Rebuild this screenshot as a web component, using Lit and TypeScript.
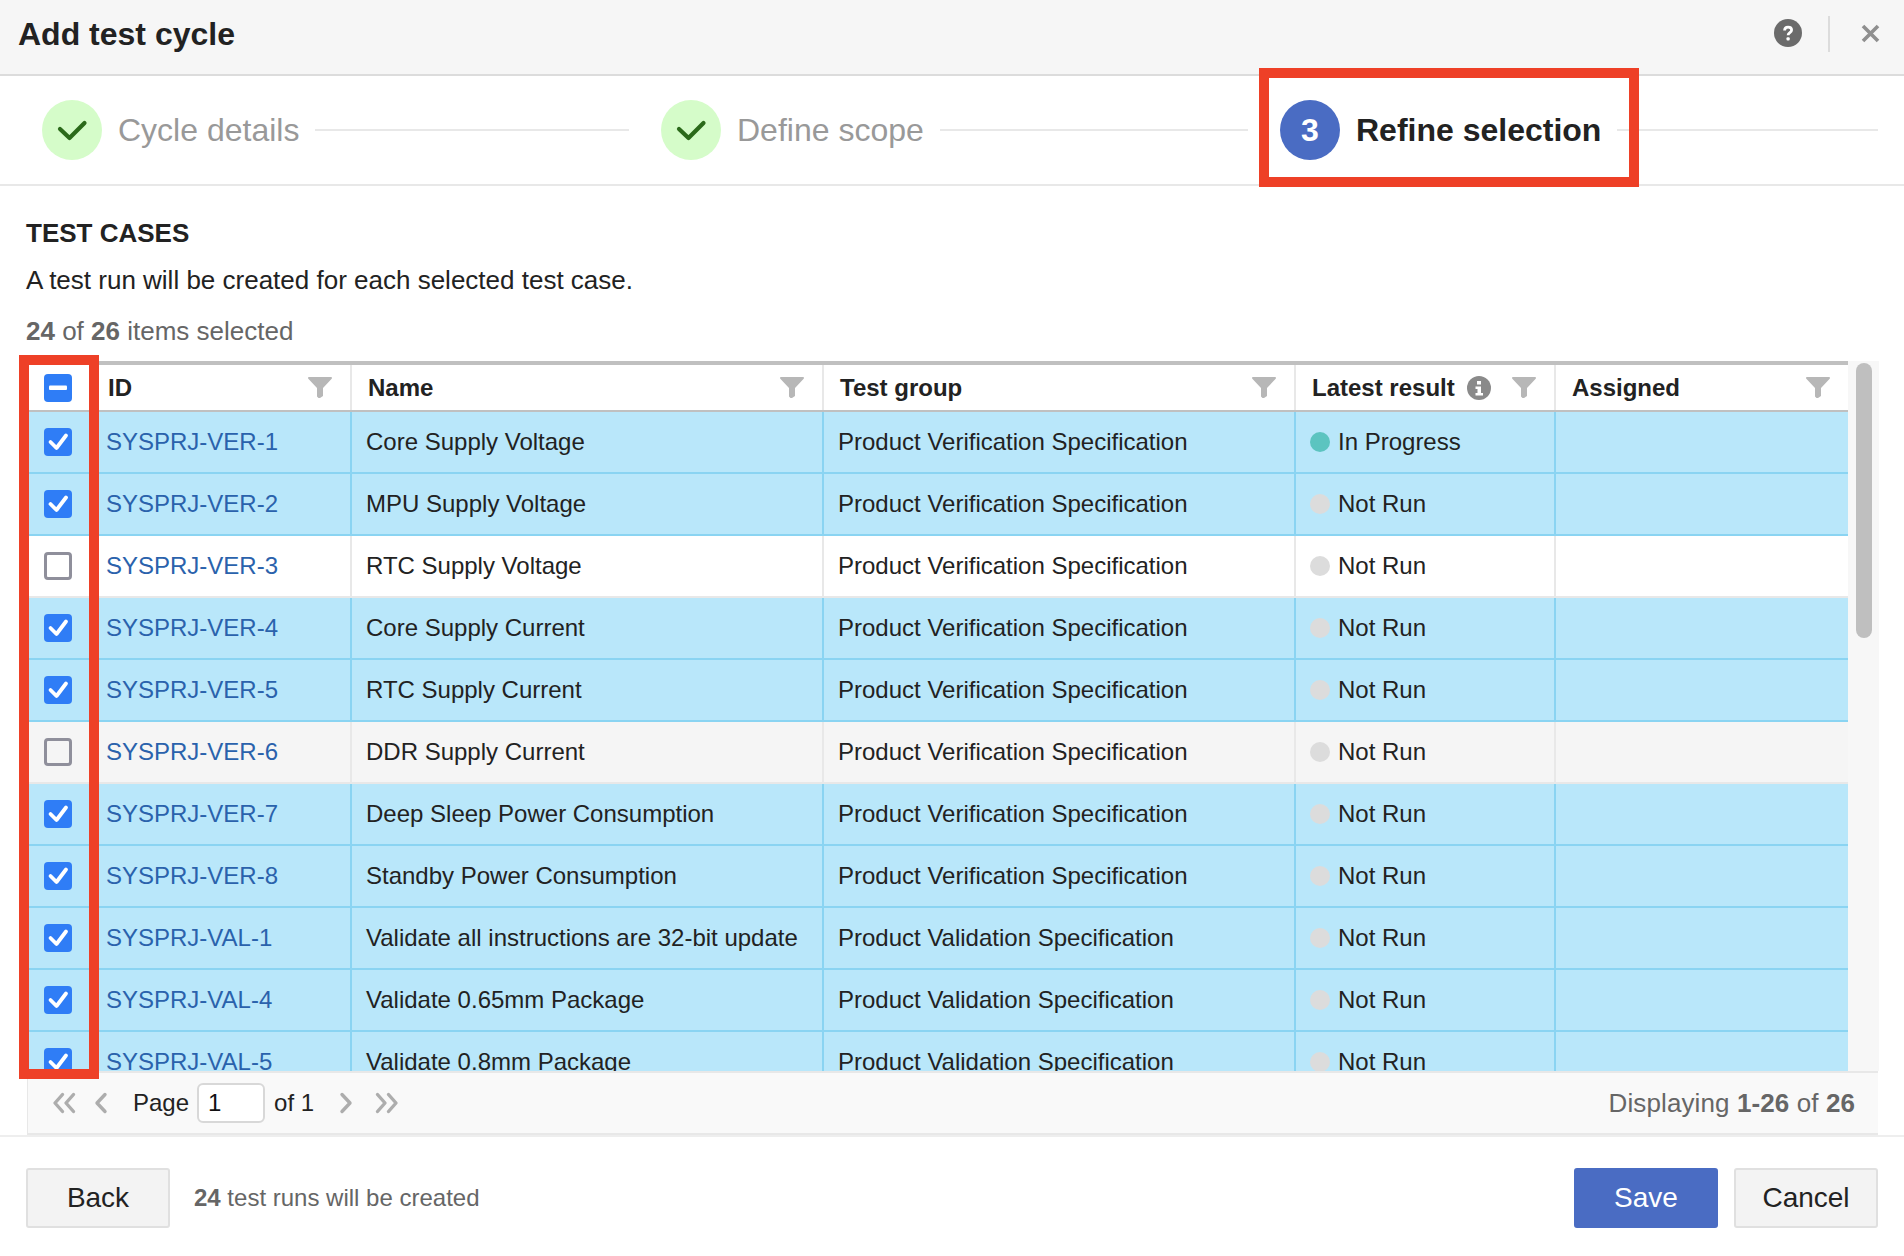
import { LitElement, css, html, svg } from "lit";
import { classMap } from "lit/directives/class-map.js";
import { customElement } from "lit/decorators.js";

type Row = { id: string; name: string; group: string; result: string; selected: boolean; hover?: boolean };

const VER = "Product Verification Specification";
const VAL = "Product Validation Specification";

const rows: Row[] = [
  { id: "SYSPRJ-VER-1", name: "Core Supply Voltage", group: VER, result: "In Progress", selected: true },
  { id: "SYSPRJ-VER-2", name: "MPU Supply Voltage", group: VER, result: "Not Run", selected: true },
  { id: "SYSPRJ-VER-3", name: "RTC Supply Voltage", group: VER, result: "Not Run", selected: false },
  { id: "SYSPRJ-VER-4", name: "Core Supply Current", group: VER, result: "Not Run", selected: true },
  { id: "SYSPRJ-VER-5", name: "RTC Supply Current", group: VER, result: "Not Run", selected: true },
  { id: "SYSPRJ-VER-6", name: "DDR Supply Current", group: VER, result: "Not Run", selected: false, hover: true },
  { id: "SYSPRJ-VER-7", name: "Deep Sleep Power Consumption", group: VER, result: "Not Run", selected: true },
  { id: "SYSPRJ-VER-8", name: "Standby Power Consumption", group: VER, result: "Not Run", selected: true },
  { id: "SYSPRJ-VAL-1", name: "Validate all instructions are 32-bit update", group: VAL, result: "Not Run", selected: true },
  { id: "SYSPRJ-VAL-4", name: "Validate 0.65mm Package", group: VAL, result: "Not Run", selected: true },
  { id: "SYSPRJ-VAL-5", name: "Validate 0.8mm Package", group: VAL, result: "Not Run", selected: true },
];

const funnel = svg`<svg class="funnel" viewBox="0 0 24 21"><path d="M1 0h22c1 0 1.300 1 .7 1.800L15 11v8l-3 2h-1.500L9 19.500V11L.3 1.800C-.3 1 0 0 1 0z"/></svg>`;

const tick = svg`<svg viewBox="0 0 28 28"><path d="M6.500 14l6 6 9.500-12.500" fill="none" stroke="#fff" stroke-width="3.800" stroke-linecap="round" stroke-linejoin="round"/></svg>`;

const dash = svg`<svg viewBox="0 0 28 28"><rect x="5" y="11.500" width="18" height="4.500" rx="1" fill="#fff"/></svg>`;

const stepTick = svg`<svg viewBox="0 0 60 60"><path d="M18 29l9.500 9L42.500 23" fill="none" stroke="#2b6a1a" stroke-width="4.200" stroke-linecap="round" stroke-linejoin="round"/></svg>`;

const chevrons = (d: string, w: number) =>
  svg`<svg class="pager-icon" width=${w} height="22" viewBox="0 0 ${w} 22"><path d=${d} fill="none" stroke="#adadad" stroke-width="3.400" stroke-linecap="round" stroke-linejoin="round"/></svg>`;

@customElement("app-root")
export class AppRoot extends LitElement {
  static styles = css`
    :host {
      display: flex;
      flex-direction: column;
      position: relative;
      width: 1904px;
      height: 1256px;
      overflow: hidden;
      background: #fff;
      color: #222;
      font-family: "Liberation Sans", Arial, sans-serif;
      font-size: 24px;
    }

    .titlebar {
      flex: none;
      display: flex;
      align-items: center;
      height: 74px;
      box-sizing: content-box;
      padding: 0 24px 0 18px;
      background: #f6f6f6;
      border-bottom: 2px solid #dcdcdc;
    }
    .titlebar h1 {
      flex: 1;
      margin: 0 0 5px;
      font-size: 32px;
      font-weight: 700;
    }
    .help {
      width: 28px;
      height: 28px;
      margin-bottom: 8px;
    }
    .divider {
      width: 2px;
      height: 36px;
      margin: 0 31px 6px 26px;
      background: #dcdcdc;
    }
    .close {
      width: 19px;
      height: 19px;
      margin-bottom: 8px;
    }

    .steps {
      flex: none;
      display: flex;
      align-items: center;
      height: 108px;
      padding: 0 26px 0 42px;
      border-bottom: 2px solid #e8e8e8;
    }
    .step {
      flex: none;
      width: 619px;
      padding-right: 32px;
      box-sizing: border-box;
      display: flex;
      align-items: center;
      gap: 16px;
      font-size: 32px;
      color: #999;
    }
    .step:last-child {
      flex: 1;
      padding-right: 0;
    }
    .step.current {
      color: #222;
      font-weight: 700;
    }
    .bullet {
      flex: none;
      width: 60px;
      height: 60px;
      border-radius: 50%;
      background: #d5fcc9;
      display: flex;
      align-items: center;
      justify-content: center;
    }
    .bullet svg {
      width: 60px;
      height: 60px;
    }
    .step.current .bullet {
      background: #4a6cc3;
      color: #fff;
    }
    .rule {
      flex: 1;
      height: 2px;
      background: #e8e8e8;
    }

    .content {
      flex: 1;
      display: flex;
      flex-direction: column;
      padding: 0 26px;
      min-height: 0;
    }
    .content h2 {
      margin: 32px 0 0;
      font-size: 26px;
      line-height: 30px;
      font-weight: 700;
    }
    .lead {
      margin: 17px 0 0;
      font-size: 26px;
      line-height: 30px;
    }
    .count {
      margin: 21px 0 0;
      font-size: 26px;
      line-height: 30px;
      color: #666;
    }

    .grid-wrap {
      flex: none;
      margin-top: 15px;
      display: flex;
      height: 710px;
    }
    .table {
      width: 1822px;
      flex: none;
      border-top: 4px solid #c0c0c0;
      display: flex;
      flex-direction: column;
      overflow: hidden;
    }
    .row {
      flex: none;
      display: grid;
      grid-template-columns: 65px 261px 472px 472px 260px 292px;
      height: 62px;
      box-sizing: border-box;
      border-bottom: 2px solid #e8e8e8;
    }
    .row.head {
      height: 47px;
      border-bottom: 2px solid #c0c0c0;
      font-weight: 700;
    }
    .row.selected {
      background: #b9e7fa;
      border-bottom-color: #8ad4f2;
    }
    .row.hover {
      background: #f5f5f5;
    }
    .cell {
      display: flex;
      align-items: center;
      padding-left: 14px;
      border-right: 2px solid #e8e8e8;
      white-space: nowrap;
      min-width: 0;
    }
    .cell:nth-child(2) {
      padding-left: 15px;
    }
    .row.selected .cell {
      border-right-color: #8ad4f2;
    }
    .row.head .cell {
      padding: 0 18px 0 16px;
    }
    .row.head .cell:nth-child(2) {
      padding-left: 17px;
    }
    .row.head .cell:first-child,
    .cell:first-child {
      padding: 0 1px 0 0;
      justify-content: center;
      border-right: 0;
    }
    .cell:last-child {
      border-right: 0;
    }
    .head-label {
      flex: 1;
    }
    .info {
      width: 24px;
      height: 24px;
      margin-right: 21px;
      flex: none;
    }
    .funnel {
      width: 24px;
      height: 21px;
      flex: none;
      fill: #b7b7b7;
    }
    .check {
      width: 28px;
      height: 28px;
      box-sizing: border-box;
      border-radius: 4px;
      background: #2f7df6;
    }
    .check svg {
      display: block;
    }
    .check.off {
      background: transparent;
      border: 3px solid #8f8f9b;
    }
    a {
      color: #2a62ac;
      text-decoration: none;
    }
    .dot {
      width: 20px;
      height: 20px;
      border-radius: 50%;
      margin-right: 8px;
      background: #dcdcdc;
      flex: none;
    }
    .dot.progress {
      background: #5cc4c0;
    }

    .track {
      flex: none;
      width: 31px;
      box-sizing: border-box;
      background: #f7f7f7;
      padding: 2px 7px 0 8px;
    }
    .thumb {
      height: 275px;
      border-radius: 8px;
      background: #bfbfbf;
    }

    .pager {
      flex: none;
      display: flex;
      align-items: center;
      height: 64px;
      box-sizing: border-box;
      margin-left: 1px;
      padding: 0 23px 0 24px;
      background: #f9f9f9;
      border: 0 solid #e8e8e8;
      border-width: 2px 0 2px 1px;
    }
    .pager-icon {
      display: block;
      flex: none;
    }
    .gap-first {
      margin-right: 17px;
    }
    .gap-prev {
      margin-right: 25px;
    }
    .gap-next {
      margin: 0 21px 0 25px;
    }
    .page-input {
      width: 68px;
      height: 40px;
      box-sizing: border-box;
      margin: 0 9px 0 8px;
      padding-left: 9px;
      border: 2px solid #d8d8d8;
      border-radius: 6px;
      background: #fff;
      color: #111;
      display: flex;
      align-items: center;
    }
    .shown {
      margin-left: auto;
      font-size: 26px;
      letter-spacing: 0.1px;
      color: #666;
    }

    .footer {
      flex: none;
      height: 121px;
      box-sizing: border-box;
      border-top: 2px solid #eee;
      display: flex;
      align-items: flex-start;
      padding: 31px 26px 0;
    }
    .btn {
      width: 144px;
      height: 60px;
      box-sizing: border-box;
      display: flex;
      align-items: center;
      justify-content: center;
      font-size: 28px;
      border: 2px solid #e0e0e0;
      border-radius: 3px;
      background: #f3f3f3;
      color: #222;
    }
    .btn.primary {
      border-color: #4a6cc3;
      background: #4a6cc3;
      color: #fff;
      margin-right: 16px;
    }
    .note {
      flex: 1;
      margin-left: 24px;
      line-height: 60px;
      color: #666;
    }

    /* annotation boxes drawn on top of the screenshot */
    .mark {
      position: absolute;
      box-sizing: border-box;
      border: 10px solid #ee4027;
      pointer-events: none;
    }
    .mark.stepmark {
      left: 1259px;
      top: 68px;
      width: 380px;
      height: 119px;
    }
    .mark.colmark {
      left: 19px;
      top: 355px;
      width: 80px;
      height: 724px;
    }
  `;

  private renderRow(r: Row) {
    const cls = { row: true, selected: r.selected, hover: !!r.hover };
    return html`
      <div class=${classMap(cls)}>
        <div class="cell">
          <div class=${classMap({ check: true, off: !r.selected })}>${r.selected ? tick : ""}</div>
        </div>
        <div class="cell"><a href="#">${r.id}</a></div>
        <div class="cell">${r.name}</div>
        <div class="cell">${r.group}</div>
        <div class="cell">
          <span class=${classMap({ dot: true, progress: r.result === "In Progress" })}></span>${r.result}
        </div>
        <div class="cell"></div>
      </div>
    `;
  }

  render() {
    return html`
      <div class="titlebar">
        <h1>Add test cycle</h1>
        <svg class="help" viewBox="0 0 28 28">
          <circle cx="14" cy="14" r="14" fill="#6b6b6b" />
          <path d="M10.600 11.500c0-2.200 1.500-3.400 3.500-3.400s3.500 1.200 3.500 3c0 2.600-3.500 2.500-3.500 5.200" fill="none" stroke="#fff" stroke-width="2.800" />
          <rect x="12.500" y="18.200" width="3.200" height="3.200" rx="1" fill="#fff" />
        </svg>
        <div class="divider"></div>
        <svg class="close" viewBox="0 0 19 19">
          <path d="M2 2l15 15M17 2L2 17" stroke="#8f8f8f" stroke-width="3.600" fill="none" />
        </svg>
      </div>

      <div class="steps">
        <div class="step"><span class="bullet">${stepTick}</span>Cycle details<span class="rule"></span></div>
        <div class="step"><span class="bullet">${stepTick}</span>Define scope<span class="rule"></span></div>
        <div class="step current"><span class="bullet">3</span>Refine selection<span class="rule"></span></div>
      </div>

      <div class="content">
        <h2>TEST CASES</h2>
        <p class="lead">A test run will be created for each selected test case.</p>
        <p class="count"><b>24</b> of <b>26</b> items selected</p>

        <div class="grid-wrap">
          <div class="table">
            <div class="row head">
              <div class="cell"><div class="check">${dash}</div></div>
              <div class="cell"><span class="head-label">ID</span>${funnel}</div>
              <div class="cell"><span class="head-label">Name</span>${funnel}</div>
              <div class="cell"><span class="head-label">Test group</span>${funnel}</div>
              <div class="cell">
                <span>Latest result</span>
                <span class="head-label"></span>
                <svg class="info" viewBox="0 0 24 24">
                  <circle cx="12" cy="12" r="12" fill="#8a8a8a" />
                  <rect x="10" y="5" width="4" height="3.500" fill="#fff" />
                  <path d="M8.500 10.500H14V17h2v2.500H8.500V17h2v-4H8.500z" fill="#fff" />
                </svg>
                ${funnel}
              </div>
              <div class="cell"><span class="head-label">Assigned</span>${funnel}</div>
            </div>
            ${rows.map((r) => this.renderRow(r))}
          </div>
          <div class="track"><div class="thumb"></div></div>
        </div>

        <div class="pager">
          <span class="gap-first">${chevrons("M10.500 2.500L3 11l7.500 8.500M21.500 2.500L14 11l7.500 8.500", 24)}</span>
          <span class="gap-prev">${chevrons("M12 2.500L4 11l8 8.500", 15)}</span>
          Page
          <span class="page-input">1</span>
          of 1
          <span class="gap-next">${chevrons("M3 2.500L11 11l-8 8.500", 15)}</span>
          ${chevrons("M2.500 2.500L10 11l-7.500 8.500M13.500 2.500L21 11l-7.500 8.500", 24)}
          <span class="shown">Displaying <b>1-26</b> of <b>26</b></span>
        </div>
      </div>

      <div class="footer">
        <div class="btn">Back</div>
        <div class="note"><b>24</b> test runs will be created</div>
        <div class="btn primary">Save</div>
        <div class="btn">Cancel</div>
      </div>

      <div class="mark stepmark"></div>
      <div class="mark colmark"></div>
    `;
  }
}
